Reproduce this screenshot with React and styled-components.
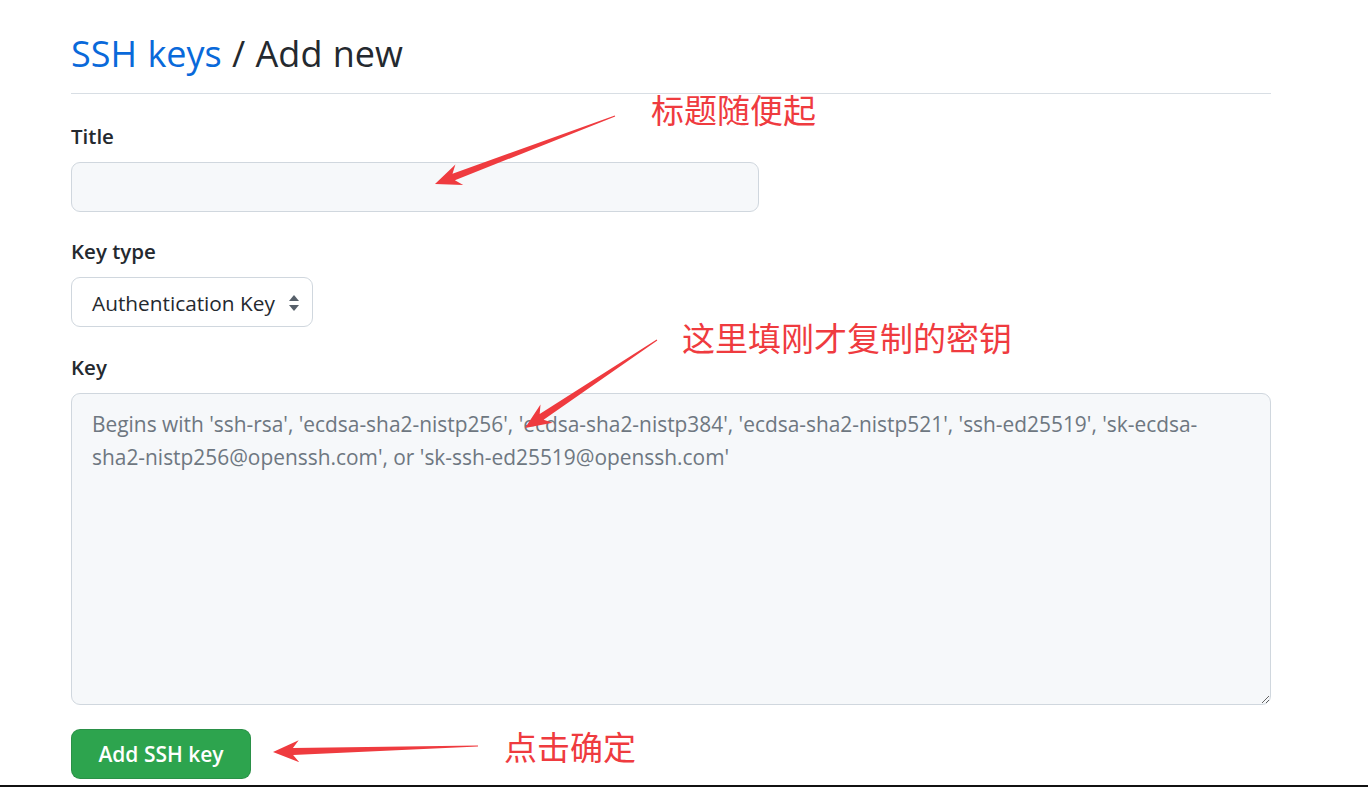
import React from "react";
import styled, { createGlobalStyle } from "styled-components";

const Global = createGlobalStyle`
  html, body { margin: 0; padding: 0; background: #fff; }
  body { font-family: "Open Sans", "Noto Sans", sans-serif; color: #24292f; }
  * { box-sizing: border-box; }
`;

const Page = styled.div`
  position: relative;
  height: 787px;
  border-bottom: 2px solid #111;
  overflow: hidden;
`;

const Container = styled.div`
  width: 1200px;
  margin-left: 71px;
  padding-top: 27px;
  display: flex;
  flex-direction: column;
`;

const Subhead = styled.h1`
  margin: 0;
  font-size: 36px;
  font-weight: 400;
  line-height: 54px;
  padding-bottom: 12px;
  border-bottom: 1px solid #d8dee4;
  color: #24292f;
  word-spacing: 1px;
`;

const Crumb = styled.a`
  color: #0969da;
  text-decoration: none;
`;

const Group = styled.div`
  display: flex;
  flex-direction: column;
  align-items: flex-start;
  margin-top: ${(p) => p.$top}px;
`;

const Label = styled.label`
  font-size: 20.5px;
  font-weight: 600;
  line-height: 31px;
  margin-bottom: 10px;
`;

const TextInput = styled.input`
  width: 688px;
  height: 50px;
  border: 1px solid #d0d7de;
  border-radius: 9px;
  background: #f6f8fa;
  padding: 0 18px;
  font: inherit;
  font-size: 21px;
  outline: none;
`;

const SelectBox = styled.div`
  width: 242px;
  height: 50px;
  border: 1px solid #d0d7de;
  border-radius: 9px;
  background: #fff;
  padding: 2px 12px 0 20px;
  display: flex;
  align-items: center;
  justify-content: space-between;
  font-size: 20.8px;
  color: #24292f;
`;

const KeyArea = styled.textarea`
  width: 1200px;
  height: 312px;
  border: 1px solid #d0d7de;
  border-radius: 9px;
  background: #f6f8fa;
  padding: 14px 20px;
  font-family: inherit;
  font-size: 20.9px;
  line-height: 33px;
  resize: vertical;
  outline: none;
  &::placeholder { color: #6e7781; }
`;

const Button = styled.button`
  margin-top: 24px;
  align-self: flex-start;
  width: 180px;
  height: 50px;
  border: 1px solid rgba(27, 31, 36, 0.15);
  border-radius: 9px;
  background: #2da44e;
  color: #fff;
  font-family: inherit;
  font-size: 21px;
  font-weight: 600;
  cursor: pointer;
`;

const Overlay = styled.svg`
  position: absolute;
  inset: 0;
  pointer-events: none;
`;

const Note = styled.span`
  position: absolute;
  left: ${(p) => p.$x}px;
  top: ${(p) => p.$y}px;
  font-family: "Noto Sans CJK SC", sans-serif;
  font-size: 33px;
  line-height: 1;
  color: #ef3b3f;
  white-space: nowrap;
  pointer-events: none;
`;

function arrowPoints(tx, ty, px, py, L = 26, W = 11, w = 3.5) {
  const dx = px - tx, dy = py - ty;
  const len = Math.hypot(dx, dy);
  const ux = dx / len, uy = dy / len;
  const nx = -uy, ny = ux;
  const bx = px - ux * L, by = py - uy * L;
  const cx = px - ux * (L - 6), cy = py - uy * (L - 6);
  const pts = [
    [tx + nx * 0.6, ty + ny * 0.6],
    [cx + nx * w, cy + ny * w],
    [bx + nx * W, by + ny * W],
    [px, py],
    [bx - nx * W, by - ny * W],
    [cx - nx * w, cy - ny * w],
    [tx - nx * 0.6, ty - ny * 0.6],
  ];
  return pts.map((p) => p.map((v) => v.toFixed(1)).join(",")).join(" ");
}

const placeholder =
  "Begins with 'ssh-rsa', 'ecdsa-sha2-nistp256', 'ecdsa-sha2-nistp384', 'ecdsa-sha2-nistp521', 'ssh-ed25519', 'sk-ecdsa-\nsha2-nistp256@openssh.com', or 'sk-ssh-ed25519@openssh.com'";

export default function App() {
  return (
    <Page>
      <Global />
      <Container>
        <Subhead>
          <Crumb href="#">SSH keys</Crumb> / Add new
        </Subhead>
        <Group $top={27}>
          <Label>Title</Label>
          <TextInput type="text" />
        </Group>
        <Group $top={24}>
          <Label>Key type</Label>
          <SelectBox>
            <span>Authentication Key</span>
            <svg width="12" height="18" viewBox="0 0 12 18">
              <path d="M6 1 L11 7 H1 Z" fill="#57606a" />
              <path d="M6 17 L11 11 H1 Z" fill="#57606a" />
            </svg>
          </SelectBox>
        </Group>
        <Group $top={25}>
          <Label>Key</Label>
          <KeyArea placeholder={placeholder} />
        </Group>
        <Button>Add SSH key</Button>
      </Container>
      <Overlay width="1368" height="787" viewBox="0 0 1368 787">
        <polygon points={arrowPoints(615, 116, 435, 184)} fill="#ef3b3f" />
        <polygon points={arrowPoints(657, 340, 525, 428)} fill="#ef3b3f" />
        <polygon points={arrowPoints(478, 746, 273, 752)} fill="#ef3b3f" />
      </Overlay>
      <Note $x={651} $y={93}>标题随便起</Note>
      <Note $x={682} $y={321}>这里填刚才复制的密钥</Note>
      <Note $x={504} $y={730}>点击确定</Note>
    </Page>
  );
}
